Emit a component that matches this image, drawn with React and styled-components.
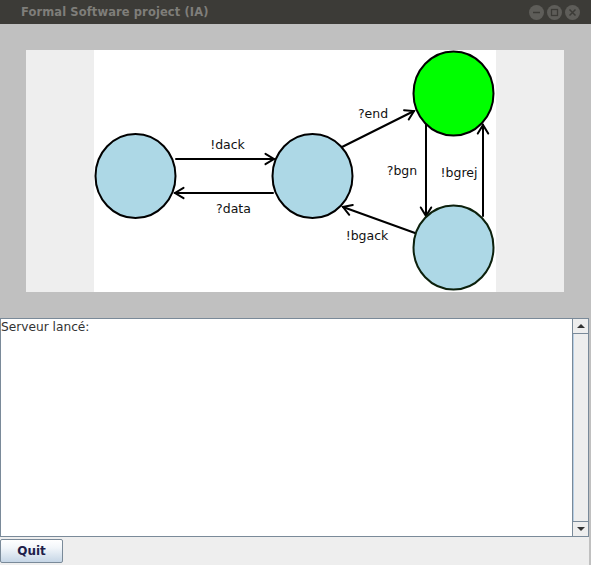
import React from "react";
import styled, { createGlobalStyle } from "styled-components";

const GlobalStyle = createGlobalStyle`
  html, body {
    margin: 0;
    padding: 0;
    background: #c0c0c0;
  }
`;

// --- Window chrome ---
const Window = styled.div`
  width: 591px;
  height: 565px;
  display: flex;
  flex-direction: column;
  overflow: hidden;
  font-family: "DejaVu Sans", sans-serif;
  background: #c0c0c0;
`;

const TitleBar = styled.div`
  height: 24px;
  flex-shrink: 0;
  display: flex;
  align-items: center;
  justify-content: space-between;
  background: #3c3b37;
  padding: 0 11px 0 21px;
`;

const Title = styled.span`
  font-family: "DejaVu Sans", sans-serif;
  font-weight: 700;
  font-size: 11.5px;
  color: #7f7e7a;
  letter-spacing: 0.1px;
`;

const WindowButtons = styled.div`
  display: flex;
  gap: 3px;
  margin-top: 1px;
`;

const WinButton = styled.div`
  width: 15px;
  height: 15px;
  border-radius: 50%;
  background: #5e5d59;
  display: flex;
  align-items: center;
  justify-content: center;
`;

// --- Graph area ---
const GraphArea = styled.div`
  height: 294px;
  flex-shrink: 0;
  padding: 26px 27px 26px 26px;
  box-sizing: border-box;
  background: #c0c0c0;
`;

const GraphPanel = styled.div`
  height: 100%;
  background: #eeeeee;
  padding-left: 68px;
`;

const Canvas = styled.div`
  width: 402px;
  height: 100%;
  background: #ffffff;
`;

// --- Console ---
const Lower = styled.div`
  flex: 1;
  display: flex;
  flex-direction: column;
  margin-right: 2px;
  background: #eeeeee;
`;

const Console = styled.div`
  height: 219px;
  display: flex;
  border: 1px solid #7a8a99;
  box-sizing: border-box;
  background: #ffffff;
`;

const ConsoleText = styled.div`
  flex: 1;
  font-family: "DejaVu Sans", sans-serif;
  font-size: 12.2px;
  color: #333333;
  padding-top: 1px;
  line-height: 14px;
`;

const ScrollBar = styled.div`
  width: 15px;
  display: flex;
  flex-direction: column;
  border-left: 1px solid #7a8a99;
  background: #eeeeee;
`;

const ScrollButton = styled.div`
  height: 15px;
  flex-shrink: 0;
  display: flex;
  align-items: center;
  justify-content: center;
  background: #eeeeee;
  border-top: ${(p) => (p.$down ? "1px solid #7a8a99" : "none")};
  border-bottom: ${(p) => (p.$down ? "none" : "1px solid #7a8a99")};
  box-sizing: border-box;
`;

const Track = styled.div`
  flex: 1;
  background: #eeeeee;
  border-left: 1px solid #b8cfe5;
`;

const Arrow = styled.div`
  width: 0;
  height: 0;
  border-left: 4px solid transparent;
  border-right: 4px solid transparent;
  ${(p) =>
    p.$down
      ? "border-top: 4px solid #333333;"
      : "border-bottom: 4px solid #333333;"}
`;

const ButtonBar = styled.div`
  flex: 1;
  display: flex;
  align-items: flex-start;
  padding-top: 2px;
  background: #eeeeee;
`;

const QuitButton = styled.button`
  width: 63px;
  height: 24px;
  margin: 0;
  padding: 0;
  border: 1px solid #7a8a99;
  border-radius: 2px;
  background: linear-gradient(#ffffff 0%, #f2f6fa 35%, #c6d6e6 100%);
  font-family: "DejaVu Sans", sans-serif;
  font-weight: 700;
  font-size: 12px;
  color: #1e1e4a;
  cursor: pointer;
`;

// --- Graph drawing helpers ---
const Edge = ({ x1, y1, x2, y2 }) => {
  const a = Math.atan2(y2 - y1, x2 - x1);
  const len = 10;
  const spread = 0.55;
  const p1 = [x2 - len * Math.cos(a - spread), y2 - len * Math.sin(a - spread)];
  const p2 = [x2 - len * Math.cos(a + spread), y2 - len * Math.sin(a + spread)];
  return (
    <g stroke="#000" strokeWidth="2" fill="none" strokeLinecap="round">
      <line x1={x1} y1={y1} x2={x2} y2={y2} />
      <polyline points={`${p1[0]},${p1[1]} ${x2},${y2} ${p2[0]},${p2[1]}`} />
    </g>
  );
};

const Label = ({ x, y, children }) => (
  <text
    x={x}
    y={y}
    textAnchor="middle"
    fontFamily="DejaVu Sans, sans-serif"
    fontSize="12.5"
    fill="#111"
  >
    {children}
  </text>
);

const StateNode = ({ cx, cy, fill, stroke = "#000" }) => (
  <ellipse cx={cx} cy={cy} rx="40" ry="42" fill={fill} stroke={stroke} strokeWidth="2" />
);

const Graph = () => (
  <svg width="402" height="242" viewBox="0 0 402 242">
    <Edge x1={82} y1={109} x2={180} y2={109} />
    <Edge x1={179} y1={143} x2={81} y2={143} />
    <Edge x1={248} y1={97} x2={320} y2={61} />
    <Edge x1={321} y1={183} x2={249} y2={157} />
    <Edge x1={332} y1={73} x2={332} y2={166} />
    <Edge x1={389} y1={166} x2={389} y2={75} />

    <StateNode cx={41.5} cy={126} fill="#add8e6" />
    <StateNode cx={218.5} cy={126} fill="#add8e6" />
    <StateNode cx={359.5} cy={43.5} fill="#00ff00" />
    <StateNode cx={359.5} cy={197.5} fill="#add8e6" stroke="#0c200c" />

    <Label x={133.5} y={99}>!dack</Label>
    <Label x={139.5} y={163}>?data</Label>
    <Label x={279} y={68}>?end</Label>
    <Label x={308} y={125}>?bgn</Label>
    <Label x={365} y={127}>!bgrej</Label>
    <Label x={273} y={190}>!bgack</Label>
  </svg>
);

const App = () => {
  return (
    <Window>
      <GlobalStyle />
      <TitleBar>
        <Title>Formal Software project (IA)</Title>
        <WindowButtons>
          <WinButton>
            <svg width="9" height="9" viewBox="0 0 9 9">
              <line x1="1" y1="4.5" x2="8" y2="4.5" stroke="#3c3b37" strokeWidth="1.5" />
            </svg>
          </WinButton>
          <WinButton>
            <svg width="9" height="9" viewBox="0 0 9 9">
              <rect x="1.5" y="1.5" width="6" height="6" fill="none" stroke="#3c3b37" strokeWidth="1.3" />
            </svg>
          </WinButton>
          <WinButton>
            <svg width="9" height="9" viewBox="0 0 9 9">
              <path d="M1.5 1.5 L7.5 7.5 M7.5 1.5 L1.5 7.5" stroke="#3c3b37" strokeWidth="1.5" />
            </svg>
          </WinButton>
        </WindowButtons>
      </TitleBar>

      <GraphArea>
        <GraphPanel>
          <Canvas>
            <Graph />
          </Canvas>
        </GraphPanel>
      </GraphArea>

      <Lower>
        <Console>
          <ConsoleText>Serveur lancé:</ConsoleText>
          <ScrollBar>
            <ScrollButton>
              <Arrow />
            </ScrollButton>
            <Track />
            <ScrollButton $down>
              <Arrow $down />
            </ScrollButton>
          </ScrollBar>
        </Console>
        <ButtonBar>
          <QuitButton>Quit</QuitButton>
        </ButtonBar>
      </Lower>
    </Window>
  );
};

export default App;
